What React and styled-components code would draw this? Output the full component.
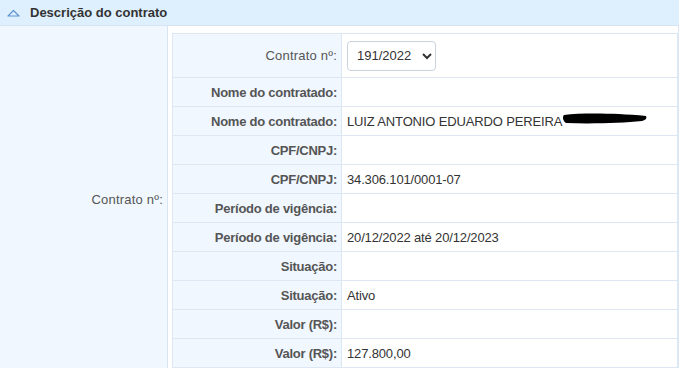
import React from "react";
import styled, { createGlobalStyle } from "styled-components";

const GlobalStyle = createGlobalStyle`
  html, body {
    margin: 0;
    padding: 0;
    background: #ffffff;
    font-family: "Liberation Sans", Arial, sans-serif;
  }
`;

const Panel = styled.div`
  width: 679px;
  height: 369px;
  overflow: hidden;
  background: #ffffff;
`;

const Header = styled.div`
  display: flex;
  align-items: center;
  gap: 10px;
  height: 26px;
  padding-left: 7px;
  background: #deeffd;
  border-bottom: 1px solid #d6e4f2;
  box-sizing: border-box;
  color: #333333;
  font-size: 13px;
  font-weight: bold;
`;

const Body = styled.div`
  display: grid;
  grid-template-columns: 168px 1fr;
  border-right: 1px solid #dde7f3;
`;

const SideLabel = styled.div`
  display: flex;
  align-items: center;
  justify-content: flex-end;
  padding: 4px 4px 0 0;
  background: #f0f7ff;
  border-right: 1px solid #d9e4f1;
  color: #555555;
  font-size: 13px;
  letter-spacing: 0.2px;
`;

const Content = styled.div`
  padding: 7px 0 0 4px;
  background: #ffffff;
`;

const Table = styled.table`
  width: 100%;
  border-collapse: collapse;
  border: 1px solid #dde7f3;
  font-size: 13px;
`;

const Row = styled.tr`
  height: ${(p) => (p.$tall ? "44px" : "29px")};
  border-bottom: 1px solid #dde7f3;
`;

const Label = styled.td`
  width: 164px;
  padding: 0 4px 0 0;
  text-align: right;
  background: #f0f7ff;
  border-right: 1px solid #dde7f3;
  color: #555555;
  font-weight: ${(p) => (p.$plain ? "normal" : "bold")};
  letter-spacing: ${(p) => (p.$plain ? "0.2px" : "-0.25px")};
  white-space: nowrap;
`;

const Value = styled.td`
  padding: 0 5px;
  color: #333333;
  white-space: nowrap;
  letter-spacing: -0.15px;
`;

const Select = styled.select`
  height: 30px;
  width: 89px;
  padding: 0 4px 0 5px;
  border: 1px solid #c9d3de;
  border-radius: 4px;
  background: #ffffff;
  color: #333333;
  font-family: "Liberation Sans", Arial, sans-serif;
  font-size: 13px;
`;

const Redacted = styled.svg`
  vertical-align: middle;
  margin-left: 0;
  margin-top: -6px;
`;

const Caret = () => (
  <svg width="13" height="8" viewBox="0 0 13 8">
    <path d="M1 7 L6.5 1.5 L12 7 Z" fill="none" stroke="#5f93d2" strokeWidth="1.2" strokeLinejoin="round" />
  </svg>
);

const rows = [
  { label: "Nome do contratado:", value: "" },
  { label: "Nome do contratado:", value: "LUIZ ANTONIO EDUARDO PEREIRA", redacted: true },
  { label: "CPF/CNPJ:", value: "" },
  { label: "CPF/CNPJ:", value: "34.306.101/0001-07" },
  { label: "Período de vigência:", value: "" },
  { label: "Período de vigência:", value: "20/12/2022 até 20/12/2023" },
  { label: "Situação:", value: "" },
  { label: "Situação:", value: "Ativo" },
  { label: "Valor (R$):", value: "" },
  { label: "Valor (R$):", value: "127.800,00" },
];

export default function App() {
  return (
    <Panel>
      <GlobalStyle />
      <Header>
        <Caret />
        <span>Descrição do contrato</span>
      </Header>
      <Body>
        <SideLabel>Contrato nº:</SideLabel>
        <Content>
          <Table>
            <tbody>
              <Row $tall>
                <Label $plain>Contrato nº:</Label>
                <Value>
                  <Select defaultValue="191/2022">
                    <option>191/2022</option>
                  </Select>
                </Value>
              </Row>
              {rows.map((r, i) => (
                <Row key={i}>
                  <Label>{r.label}</Label>
                  <Value>
                    {r.value}
                    {r.redacted && (
                      <Redacted width="86" height="14" viewBox="0 0 86 14">
                        <path
                          d="M2 3 C20 1 50 1 84 4 C85 6 84 8 80 9 C60 11 30 12 4 11 C1 9 0 5 2 3 Z"
                          fill="#000000"
                        />
                      </Redacted>
                    )}
                  </Value>
                </Row>
              ))}
            </tbody>
          </Table>
        </Content>
      </Body>
    </Panel>
  );
}
